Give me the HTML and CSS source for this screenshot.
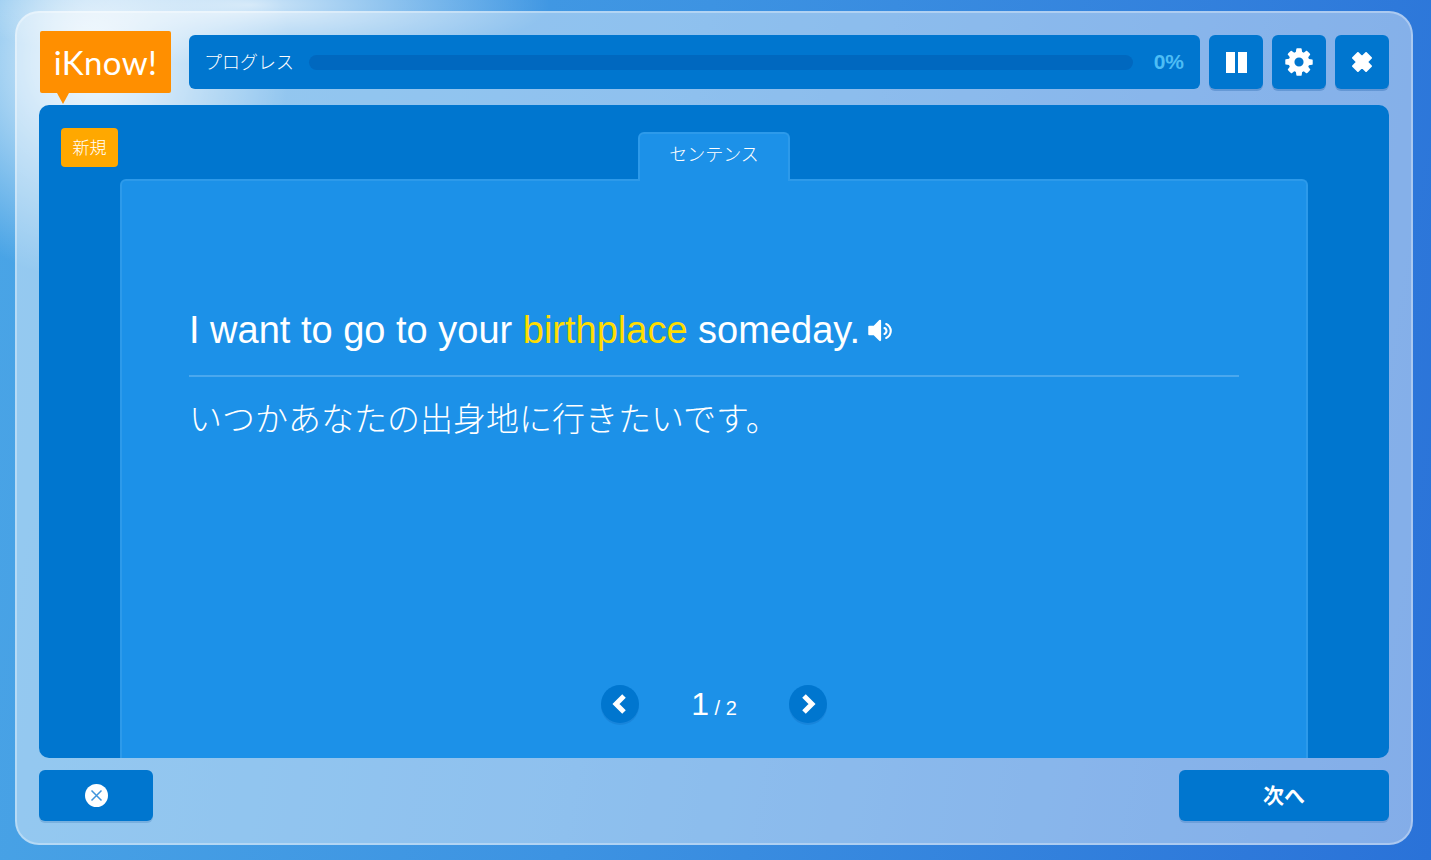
FILE: index.html
```html
<!DOCTYPE html>
<html lang="ja">
<head>
<meta charset="utf-8">
<title>iKnow!</title>
<link rel="stylesheet" href="styles.css">
</head>
<body>
<div class="frame">
  <header class="top">
    <div class="logo"><span class="logo-text">iKnow!</span></div>
    <div class="progress">
      <span class="progress-label">プログレス</span>
      <div class="track"></div>
      <span class="percent">0%</span>
    </div>
    <button class="tool" aria-label="pause">
      <svg class="ico-pause" viewBox="0 0 21 21"><path d="M0 0h9v21H0zM12 0h9v21h-9z"/></svg>
    </button>
    <button class="tool" aria-label="settings">
      <svg class="ico-gear" viewBox="0 0 1792 1792"><path d="M1152 896q0-106-75-181t-181-75-181 75-75 181 75 181 181 75 181-75 75-181zm512-109v222q0 12-8 23t-20 13l-185 28q-19 54-39 91 35 50 107 138 10 12 10 25t-9 23q-27 37-99 108t-94 71q-12 0-26-9l-138-108q-44 23-91 38-16 136-29 186-7 28-36 28h-222q-14 0-24.500-8.500t-11.500-21.500l-28-184q-49-16-90-37l-141 107q-10 9-25 9-14 0-25-11-126-114-165-168-7-10-7-23 0-12 8-23 15-21 51-66.500t54-70.500q-27-50-41-99l-183-27q-13-2-21-12.500t-8-23.500v-222q0-12 8-23t19-13l186-28q14-46 39-92-40-57-107-138-10-12-10-24 0-10 9-23 26-36 98.500-107.500t94.500-71.500q13 0 26 10l138 107q44-23 91-38 16-136 29-186 7-28 36-28h222q14 0 24.500 8.500t11.500 21.500l28 184q49 16 90 37l142-107q9-9 24-9 13 0 25 10 129 119 165 170 7 8 7 22 0 12-8 23-15 21-51 66.500t-54 70.500q26 50 41 98l183 28q13 2 21 12.500t8 23.500z"/></svg>
    </button>
    <button class="tool" aria-label="close">
      <svg class="ico-close" viewBox="0 0 22 22"><path d="M1 6.500 6.500 1 11 5.500 15.500 1 21 6.500 16.500 11 21 15.500 15.500 21 11 16.500 6.500 21 1 15.500 5.500 11z" stroke-linejoin="round" stroke-width="2"/></svg>
    </button>
  </header>

  <main class="stage">
    <span class="badge">新規</span>
    <div class="tab">センテンス</div>
    <section class="card">
      <div class="sentence-block">
        <p class="sentence">I want to go to your <em class="hl">birthplace</em> someday.<svg class="ico-sound" viewBox="0 0 1472 1792"><path d="M832 352v1088q0 26-19 45t-45 19-45-19l-333-333H128q-26 0-45-19t-19-45V640q0-26 19-45t45-19h262l333-333q19-19 45-19t45 19 19 45zm384 544q0 76-42.500 141.500T1061 1131q-10 5-25 5-26 0-45-18.500t-19-45.500q0-21 12-35.500t29-25 34-23 29-36 12-56.500-12-56.500-29-36-34-23-29-25-12-35.500q0-27 19-45.500t45-18.500q15 0 25 5 70 27 112.500 93t42.500 142zm256 0q0 153-85 282.500T1162 1367q-13 5-25 5-27 0-46-19t-19-45q0-39 39-59 56-29 76-44 74-54 115.500-135.500T1344 896t-41.500-173.500T1187 587q-20-15-76-44-39-20-39-59 0-26 19-45t45-19q13 0 26 5 140 59 225 188.500T1472 896z"/></svg></p>
        <p class="translation">いつかあなたの出身地に行きたいです。</p>
      </div>
      <nav class="pager">
        <button class="round" aria-label="previous"><svg class="ico-chev" viewBox="0 0 16 20"><path d="M12 2 4 10l8 8"/></svg></button>
        <span class="count"><span class="count-now">1</span> / 2</span>
        <button class="round" aria-label="next"><svg class="ico-chev" viewBox="0 0 16 20"><path d="M4 2l8 8-8 8"/></svg></button>
      </nav>
    </section>
  </main>

  <footer class="bottom">
    <button class="action action-left" aria-label="dismiss">
      <svg class="ico-x" viewBox="0 0 23 23"><circle cx="11.500" cy="11.500" r="11.500" fill="#fff"/><path d="M6.500 6.500l10 10M16.500 6.500l-10 10" stroke="#3f94dc" stroke-width="1.500" fill="none"/></svg>
    </button>
    <button class="action action-next">次へ</button>
  </footer>
</div>
</body>
</html>
```

FILE: styles.css
```css
* { box-sizing: border-box; }
html, body { height: 100%; }
body {
  margin: 0;
  height: 860px;
  overflow: hidden;
  font-family: "Liberation Sans", "Noto Sans CJK JP", sans-serif;
  color: #fff;
  background-color: #3f8fe0;
  background-image:
    radial-gradient(ellipse 300px 60px at 250px 5px, rgba(255,255,255,.75), rgba(255,255,255,0)),
    radial-gradient(ellipse 200px 220px at 90px 60px, rgba(255,255,255,.9), rgba(255,255,255,0)),
    linear-gradient(100deg, #4aa5e6 0%, #3d93e2 45%, #2a72d8 100%);
  padding: 11px 18px 15px 15px;
}
.frame {
  height: 834px;
  border: 2px solid rgba(255,255,255,.32);
  border-radius: 24px;
  background: rgba(255,255,255,.42);
  padding: 18px 22px 0;
  display: flex;
  flex-direction: column;
}
.top {
  display: flex;
  align-items: flex-start;
  height: 74px;
  padding-left: 1px;
}
.logo {
  position: relative;
  width: 131px;
  height: 62px;
  margin-right: 18px;
  background: #ff8f00;
  border-radius: 2px;
  display: flex;
  align-items: center;
  justify-content: center;
}
.logo::after {
  content: "";
  position: absolute;
  left: 17px;
  top: 62px;
  border-left: 6px solid transparent;
  border-right: 6px solid transparent;
  border-top: 11px solid #ff8f00;
}
.logo-text {
  font-family: "Lato", sans-serif;
  font-size: 33px;
  letter-spacing: .4px;
  line-height: 1;
}
.progress {
  flex: 1;
  height: 54px;
  margin-top: 4px;
  margin-right: 9px;
  padding: 0 16px 0 15px;
  background: #0076cf;
  border-radius: 6px;
  display: flex;
  align-items: center;
}
.progress-label {
  font-size: 18px;
  font-weight: 300;
  width: 105px;
  flex: none;
  margin-top: -3px;
}
.track {
  flex: 1;
  height: 15px;
  border-radius: 8px;
  background: #0068bf;
}
.percent {
  width: 51px;
  flex: none;
  text-align: right;
  font-size: 21px;
  font-weight: 700;
  color: #4dbdf5;
}
.tool {
  width: 54px;
  height: 54px;
  margin-top: 4px;
  margin-left: 9px;
  padding: 0;
  border: 0;
  border-radius: 6px;
  background: #0076cf;
  box-shadow: 0 2px 0 rgba(0,70,150,.25);
  display: flex;
  align-items: center;
  justify-content: center;
}
.tool:first-of-type { margin-left: 0; }
.tool svg { fill: #fff; stroke: #fff; stroke-width: 0; }
.ico-pause { width: 21px; height: 21px; }
.ico-gear { width: 32px; height: 32px; }
.ico-close { width: 20px; height: 20px; }
.stage {
  position: relative;
  height: 653px;
  background: #0076cf;
  border-radius: 10px;
  padding: 74px 81px 0;
  overflow: hidden;
}
.badge {
  position: absolute;
  left: 22px;
  top: 23px;
  width: 57px;
  height: 39px;
  background: #ffa800;
  border-radius: 4px;
  font-size: 17px;
  font-weight: 300;
  display: flex;
  align-items: center;
  justify-content: center;
  padding-bottom: 3px;
}
.tab {
  position: absolute;
  left: 599px;
  top: 27px;
  width: 152px;
  height: 49px;
  background: #1c91e8;
  border: 2px solid #2d9aea;
  border-bottom: 0;
  border-radius: 6px 6px 0 0;
  font-size: 18px;
  font-weight: 300;
  text-align: center;
  line-height: 43px;
  z-index: 1;
}
.card {
  width: 1188px;
  height: 579px;
  background: #1c91e8;
  border: 2px solid #2d9aea;
  border-bottom: 0;
  border-radius: 6px 6px 0 0;
  padding: 0 67px;
  display: flex;
  flex-direction: column;
}
.sentence-block { flex: 1; padding-top: 124px; }
.sentence {
  margin: 0;
  padding-bottom: 22px;
  border-bottom: 2px solid #4aa8ee;
  font-size: 38px;
  line-height: 50px;
  height: 72px;
  display: block;
  white-space: nowrap;
}
.hl { font-style: normal; color: #ffdd00; }
.ico-sound {
  width: 29px;
  height: 30px;
  fill: #fff;
  margin-left: 5px;
  vertical-align: -3px;
}
.translation {
  margin: 15px 0 0;
  font-size: 33px;
  font-weight: 300;
  line-height: 50px;
  font-family: "Noto Sans CJK JP", sans-serif;
}
.pager {
  display: flex;
  align-items: center;
  justify-content: center;
  padding-bottom: 35px;
}
.round {
  width: 38px;
  height: 38px;
  padding: 0;
  border: 0;
  border-radius: 50%;
  background: #0076cf;
  box-shadow: 0 2px 0 rgba(0,70,150,.15);
  display: flex;
  align-items: center;
  justify-content: center;
}
.ico-chev {
  width: 16px;
  height: 20px;
  fill: none;
  stroke: #fff;
  stroke-width: 5;
}
.count {
  width: 150px;
  text-align: center;
  font-size: 20px;
}
.count-now { font-size: 32px; }
.bottom {
  display: flex;
  justify-content: space-between;
  margin-top: 12px;
}
.action {
  height: 51px;
  padding: 0;
  border: 0;
  border-radius: 6px;
  background: #0076cf;
  color: #fff;
  box-shadow: 0 2px 0 rgba(0,70,150,.18);
  display: flex;
  align-items: center;
  justify-content: center;
}
.action-left { width: 114px; }
.action-next {
  width: 210px;
  font-family: "Noto Sans CJK JP", sans-serif;
  font-size: 21px;
  font-weight: 700;
  padding-bottom: 4px;
}
.ico-x { width: 23px; height: 23px; }
```
